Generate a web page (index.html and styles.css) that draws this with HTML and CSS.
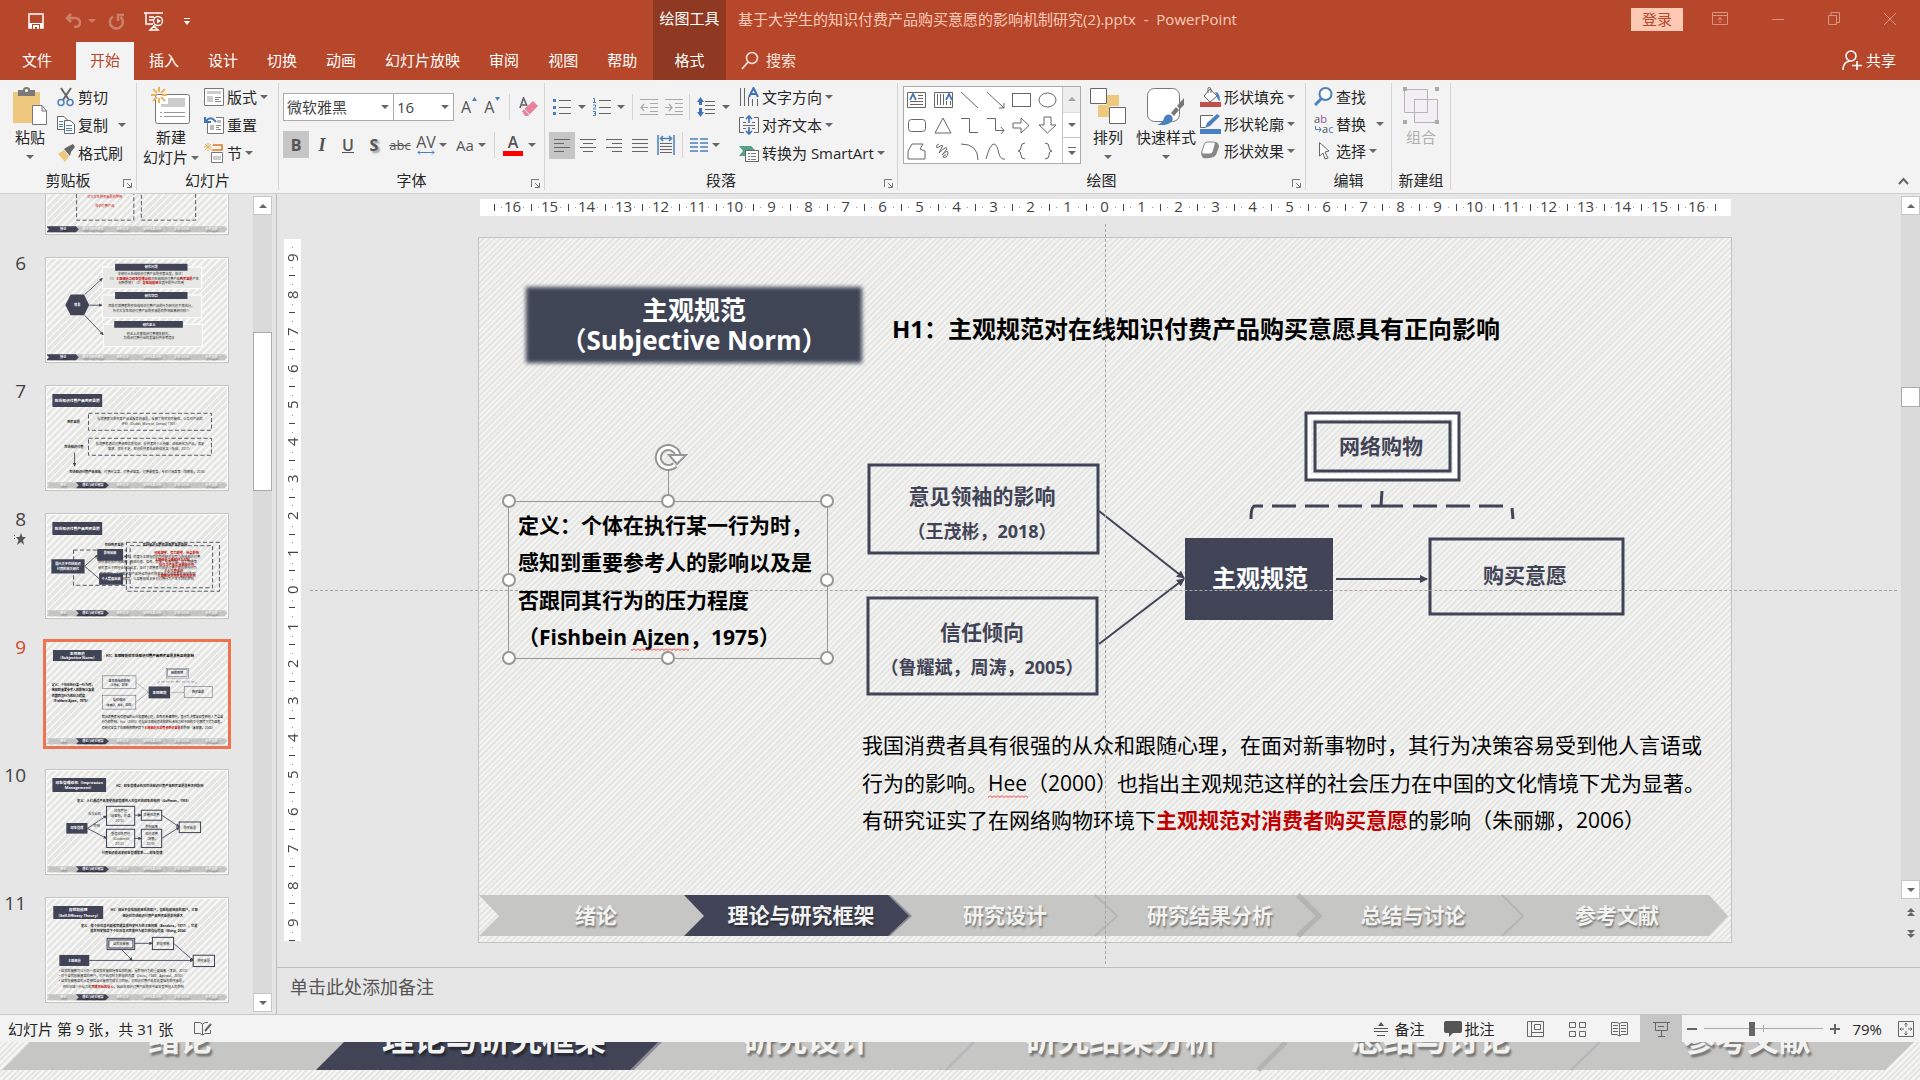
FILE: index.html
```html
<!DOCTYPE html>
<html lang="zh-CN">
<head>
    <meta charset="UTF-8">
    <meta name="viewport" content="width=device-width, initial-scale=1.0">
    <title>基于大学生的知识付费产品购买意愿的影响机制研究(2).pptx - PowerPoint</title>
    <link rel="stylesheet" href="styles.css">
</head>
<body>
    <!-- shared shapes -->
    <svg class="defs" aria-hidden="true">
        <defs>
            <marker id="arrow" viewBox="0 0 8 8" refX="7" refY="4" markerWidth="4" markerHeight="4" orient="auto">
                <path d="M0 0L8 4L0 8z" fill="#414456"/>
            </marker>
            <pattern id="wave" width="4" height="3" patternUnits="userSpaceOnUse">
                <path d="M0 .5L2 2.500L4 .5" fill="none" stroke="#f33"/>
            </pattern>
            <filter id="soft" x="-5%" y="-10%" width="110%" height="120%"><feGaussianBlur stdDeviation="2"/></filter>
            <g id="nav-bar">
                <path fill="#c6c6c5" d="M1 658H1231L1250 679L1231 699H1L21 679z"/>
                <path class="nav-sep" d="M617 658L639 679L617 699M1024 658L1045 679L1024 699"/>
                <path class="nav-sep thick" d="M820 658L841 679L820 699"/>
            </g>
            <g id="nav-text" class="nav-text">
                <text x="118" y="686">绪论</text>
                <text x="323" y="686">理论与研究框架</text>
                <text x="527" y="686">研究设计</text>
                <text x="732" y="686">研究结果分析</text>
                <text x="935" y="686">总结与讨论</text>
                <text x="1139" y="686">参考文献</text>
            </g>
            <g id="nav-first">
                <use href="#nav-bar"/>
                <path fill="#414456" d="M1 658H206L226 679L206 699H1L21 679z"/>
                <use href="#nav-text"/>
            </g>
            <g id="nav-second">
                <use href="#nav-bar"/>
                <path fill="#8b8c95" d="M408 658H412L434 679L412 699H408z"/>
                <path fill="#414456" d="M206 658H410L431 679L410 699H206L226 679z"/>
                <use href="#nav-text"/>
            </g>
            <g id="slide-9">
                <rect x="48" y="50" width="336" height="76" fill="#414456" filter="url(#soft)"/>
                <g class="t-title"><text x="216" y="83">主观规范</text><text x="216" y="113">（Subjective Norm）</text></g>
                <text class="t-h1" x="414" y="101">H1：主观规范对在线知识付费产品购买意愿具有正向影响</text>
                <g class="t-def">
                    <text x="40" y="296">定义：个体在执行某一行为时，</text>
                    <text x="40" y="333">感知到重要参考人的影响以及是</text>
                    <text x="40" y="371">否跟同其行为的压力程度</text>
                    <text x="40" y="408">（Fishbein Ajzen，1975）</text>
                </g>
                <g class="box">
                    <rect x="391" y="228" width="229" height="88"/>
                    <rect x="390" y="361" width="229" height="96"/>
                    <rect x="952" y="302" width="193" height="75"/>
                </g>
                <rect x="830" y="179" width="148" height="61" fill="none" stroke="#fff" stroke-width="6"/>
                <g class="box">
                    <rect x="828" y="176" width="153" height="67"/>
                    <rect x="837" y="185" width="135" height="49"/>
                </g>
                <rect x="707" y="301" width="148" height="82" fill="#414456"/>
                <g class="t-box">
                    <text x="504" y="267">意见领袖的影响</text>
                    <text x="504" y="403">信任倾向</text>
                    <text x="1047" y="346">购买意愿</text>
                    <text x="903" y="217">网络购物</text>
                </g>
                <g class="t-box small">
                    <text x="504" y="301">（王茂彬，2018）</text>
                    <text x="504" y="437">（鲁耀斌，周涛，2005）</text>
                </g>
                <text class="t-core" x="782" y="350">主观规范</text>
                <path class="line" marker-end="url(#arrow)" d="M621 274L706 341"/>
                <path class="line" marker-end="url(#arrow)" d="M621 407L706 342"/>
                <path class="line" marker-end="url(#arrow)" d="M858 342H949"/>
                <path class="bracket" d="M773 282Q773 269 777 269H785M794 269h24M827 269h24M860 269h24M893 269h32M903 269L904 254M935 269h24M968 269h24M1001 269h24M1034 271L1035 282"/>
                <g class="t-body">
                    <text x="384" y="516">我国消费者具有很强的从众和跟随心理，在面对新事物时，其行为决策容易受到他人言语或</text>
                    <text x="384" y="554">行为的影响。Hee（2000）也指出主观规范这样的社会压力在中国的文化情境下尤为显著。</text>
                    <text x="384" y="591">有研究证实了在网络购物环境下<tspan class="em">主观规范对消费者购买意愿</tspan>的影响（朱丽娜，2006）</text>
                </g>
                <use href="#nav-second"/>
            </g>
        </defs>
    </svg>

    <div class="app">
        <header class="titlebar">
            <div class="title-left">
                <div class="qat">
                    <button aria-label="保存"><svg width="16" height="16" viewBox="0 0 16 16"><path fill="none" stroke="#fff" stroke-width="1.5" d="M1 1H15V15H1z"/><path fill="#fff" d="M1 10h14v5H1z"/><path fill="#b7472a" d="M4 11h8v5H4z"/><path fill="#fff" d="M5 12h6v4H9v-2H7v2H5z"/></svg></button>
                    <button class="faded undo" aria-label="撤消"><svg width="18" height="16" viewBox="0 0 18 16"><path fill="none" stroke="#fff" stroke-width="2.500" d="M3 5H11Q16 5 16 10Q16 14 10 14M7 1L3 5L7 9"/></svg></button>
                    <i class="caret light faded"></i>
                    <button class="faded redo" aria-label="重复"><svg width="17" height="17" viewBox="0 0 17 17"><path fill="none" stroke="#fff" stroke-width="2.500" d="M5 3.500A6.500 6.500 0 1 0 12.500 4M10 8V2H16"/></svg></button>
                    <button class="show" aria-label="从头开始"><svg width="20" height="19" viewBox="0 0 20 19"><path fill="none" stroke="#fff" stroke-width="1.500" d="M0 1H19M2 1V12H9M5 5H10M5 8H9M10 13V15M6 18L10 14L14 18z"/><circle cx="14" cy="9" r="4.500" fill="none" stroke="#fff" stroke-width="1.300"/><path fill="#fff" d="M13 6.500L17 9L13 11.500z"/></svg></button>
                    <button class="more" aria-label="自定义快速访问工具栏"><svg width="6" height="7" viewBox="0 0 6 7"><path fill="#fff" d="M0 0H6V1H0zM0 3H6L3 7z"/></svg></button>
                </div>
                <nav class="tabs">
                    <button class="file">文件</button>
                    <button class="active">开始</button>
                    <button>插入</button>
                    <button>设计</button>
                    <button>切换</button>
                    <button>动画</button>
                    <button>幻灯片放映</button>
                    <button>审阅</button>
                    <button>视图</button>
                    <button>帮助</button>
                </nav>
            </div>
            <div class="context-tab">
                <span>绘图工具</span>
                <button>格式</button>
            </div>
            <div class="title-right">
                <div class="title-row">
                    <span class="doc">基于大学生的知识付费产品购买意愿的影响机制研究(2).pptx&nbsp; -&nbsp; PowerPoint</span>
                    <button class="login">登录</button>
                    <div class="win">
                        <button aria-label="功能区显示选项"><svg width="16" height="14" viewBox="0 0 16 14"><path d="M.5 .5H15.500V12.500H.5zM.5 3.500H15.500M8 11V5.500M5.500 8L8 5.500L10.500 8"/></svg></button>
                        <button aria-label="最小化"><svg width="12" height="14" viewBox="0 0 12 14"><path d="M0 7.500H12"/></svg></button>
                        <button aria-label="向下还原"><svg width="12" height="14" viewBox="0 0 12 14"><path d="M.5 3.500H8.500V12.500H.5zM3 3V.5H11.500V10.500H9"/></svg></button>
                        <button aria-label="关闭"><svg width="12" height="14" viewBox="0 0 12 14"><path d="M0 1L12 13M12 1L0 13"/></svg></button>
                    </div>
                </div>
                <div class="search-row">
                    <button class="search"><svg width="18" height="19" viewBox="0 0 18 19"><circle cx="11" cy="7" r="5.500" fill="none" stroke="#fbe5de" stroke-width="1.500"/><path stroke="#fbe5de" stroke-width="1.700" d="M7 11L1 18"/></svg>搜索</button>
                    <button class="share"><svg width="20" height="20" viewBox="0 0 20 20"><g fill="none" stroke="#fff" stroke-width="1.600"><circle cx="9" cy="6" r="5"/><path d="M1 20Q1 12 8 11M10 15.500H20M15 11V20"/></g></svg>共享</button>
                </div>
            </div>
        </header>

        <section class="ribbon">
            <div class="group clipboard">
                <div class="body">
                    <button class="big"><svg width="36" height="38" viewBox="0 0 36 38"><path fill="#edc87e" d="M1 5H28V36H1z"/><path fill="#7a7a7a" d="M6 3H11Q11 0 14.500 0Q18 0 18 3H23V9H6z"/><circle cx="14.500" cy="3.500" r="1.500" fill="#fff"/><path fill="#fff" stroke="#777" d="M20.500 18.500H30L34.500 24V37.500H20.500zM30 18.500V24H34.500"/></svg>粘贴<i class="caret"></i></button>
                    <div class="stack">
                        <button><svg width="18" height="20" viewBox="0 0 18 20"><path stroke="#666" stroke-width="2" fill="none" d="M4 1L12 13M14 1L6 13"/><g fill="none" stroke="#4a80bb" stroke-width="1.500"><circle cx="4" cy="15.500" r="3"/><circle cx="13" cy="15.500" r="3"/></g></svg>剪切</button>
                        <button><svg width="18" height="20" viewBox="0 0 18 20"><path fill="#fff" stroke="#666" d="M.5 1.500H7L10.500 5V14.500H.5z"/><path fill="#fff" stroke="#666" d="M7.500 5.500H13L17.500 9V18.500H7.500z"/><path stroke="#4a80bb" d="M2 6.500H6M2 9.500H6M2 11.500H6M9 10.500H15M9 13.500H15M9 15.500H15"/></svg>复制<i class="caret far"></i></button>
                        <button><svg width="18" height="18" viewBox="0 0 18 18"><path fill="#edc87e" d="M1 10L7 6L12 12L8 18z"/><path fill="#666" d="M7 5L10 3L16 0L18 3L14 8L13 12z"/></svg>格式刷</button>
                    </div>
                </div>
                <footer>剪贴板<svg class="launch" viewBox="0 0 9 9"><path d="M.5 8V.5H8M4 4L8 8M8.500 4V8.500H4"/></svg></footer>
            </div>

            <div class="group slides">
                <div class="body">
                    <button class="big"><svg width="40" height="38" viewBox="0 0 40 38"><rect x="4.500" y="7.500" width="34" height="29" rx="2" fill="#fff" stroke="#777"/><path fill="#ccc" d="M17 11H34V20H10V17H17z"/><path stroke="#999" d="M9 25.500H11M13 25.500H34M9 29.500H11M13 29.500H34"/><path stroke="#edb45b" stroke-width="2" d="M8 0V5M8 11V16M0 8H5M11 8H16M2 2L6 6M14 2L10 6M2 14L6 10M14 14L10 10"/></svg>新建<span>幻灯片<i class="caret"></i></span></button>
                    <div class="stack">
                        <button><svg width="20" height="18" viewBox="0 0 20 18"><path fill="#fff" stroke="#777" d="M.5 .5H19.500V17.500H.5z"/><path fill="#ccc" d="M3 3H17V6H3zM3 8H9V14H3z"/><path stroke="#888" d="M11 9.500H17M11 11.500H15M11 13.500H17"/></svg>版式<i class="caret"></i></button>
                        <button><svg width="20" height="18" viewBox="0 0 20 18"><path fill="#fff" stroke="#777" d="M3.500 5V17.500H19.500V1.500H12"/><path fill="#bbb" d="M13 4H17V7H13zM6 9H10V14H6z"/><path stroke="#888" d="M12 9.500H17M12 11.500H15M12 13.500H17"/><path fill="none" stroke="#3f74b5" stroke-width="2" d="M2 5Q7 -1 12 6M1 1V6H7"/></svg>重置</button>
                        <button><svg width="20" height="20" viewBox="0 0 20 20"><path stroke="#edb45b" d="M4 0V8M0 4H8M1 1L7 7M7 1L1 7"/><path fill="none" stroke="#dd7a24" stroke-width="1.500" d="M9 2H18V7H8"/><path fill="#fff" stroke="#777" d="M7.500 9.500H18.500V19.500H7.500z"/><path fill="#ccc" d="M9 13H17V17H9z"/></svg>节<i class="caret"></i></button>
                    </div>
                </div>
                <footer>幻灯片</footer>
            </div>

            <div class="group font">
                <div class="body rows">
                    <div class="row">
                        <span class="combo"><select class="family" aria-label="字体"><option>微软雅黑</option></select></span><span class="combo"><select class="size" aria-label="字号"><option>16</option></select></span>
                        <button class="tool grow">A<svg width="5" height="4" viewBox="0 0 5 4"><path fill="#4a80bb" d="M0 4L2.500 0L5 4z"/></svg></button>
                        <button class="tool grow">A<svg width="5" height="4" viewBox="0 0 5 4"><path fill="#4a80bb" d="M0 0H5L2.500 4z"/></svg></button>
                        <i class="vline"></i>
                        <button class="tool" aria-label="清除格式"><svg width="20" height="20" viewBox="0 0 20 20"><path fill="none" stroke="#666" stroke-width="1.700" d="M1 11L4.500 1L8 9M3 8H7"/><path fill="#e8819a" d="M3 14L14 4L19 9L9 19H6z"/><path stroke="#fff" d="M5 12L11 18"/></svg></button>
                    </div>
                    <div class="row marks">
                        <button class="tool on"><b>B</b></button>
                        <button class="tool serif">I</button>
                        <button class="tool under">U</button>
                        <button class="tool shadow">S</button>
                        <button class="tool strike">abc</button>
                        <button class="tool spacing">AV<svg width="18" height="5" viewBox="0 0 18 5"><path fill="none" stroke="#4a80bb" d="M1 2.500H17M3 .5L1 2.500L3 4.500M15 .5L17 2.500L15 4.500"/></svg></button><i class="caret"></i>
                        <button class="tool case">Aa</button><i class="caret"></i>
                        <i class="vline"></i>
                        <button class="tool color">A</button><i class="caret"></i>
                    </div>
                </div>
                <footer>字体<svg class="launch" viewBox="0 0 9 9"><path d="M.5 8V.5H8M4 4L8 8M8.500 4V8.500H4"/></svg></footer>
            </div>

            <div class="group para">
                <div class="body">
                    <div class="rows">
                        <div class="row">
                            <button class="tool" aria-label="项目符号"><svg width="18" height="18" viewBox="0 0 18 18"><path stroke="#666" d="M6 2.500H18M6 9.500H18M6 15.500H18"/><path stroke="#4a80bb" stroke-width="3" d="M0 2.500H3M0 9.500H3M0 15.500H3"/></svg></button><i class="caret"></i>
                            <button class="tool" aria-label="编号"><svg width="18" height="18" viewBox="0 0 18 18"><path stroke="#666" d="M6 2.500H18M6 9.500H18M6 15.500H18"/><path fill="none" stroke="#4a80bb" d="M0 .5H1.500V4.500M0 4.500H3M0 7H2.500V9L.5 11H3M0 13.500H2.500V17.500H0M1 15.500H2"/></svg></button><i class="caret"></i>
                            <i class="vline"></i>
                            <button class="tool" aria-label="降低列表级别"><svg width="18" height="18" viewBox="0 0 18 18"><path stroke="#aaa" stroke-width="1.200" fill="none" d="M0 1.500H18M10 5.500H18M10 9.500H18M10 13.500H18M0 16.500H18M1 9.500H8M4 6L1 9.500L4 13"/></svg></button>
                            <button class="tool" aria-label="提高列表级别"><svg width="18" height="18" viewBox="0 0 18 18"><path stroke="#aaa" stroke-width="1.200" fill="none" d="M0 1.500H18M10 5.500H18M10 9.500H18M10 13.500H18M0 16.500H18M0 9.500H7M4 6L7 9.500L4 13"/></svg></button>
                            <i class="vline"></i>
                            <button class="tool" aria-label="行距"><svg width="18" height="20" viewBox="0 0 18 20"><path stroke="#666" d="M8 4.500H18M8 8.500H18M8 12.500H18M8 16.500H18"/><path fill="#4472b8" d="M3.500 0L7 5H5V8H2V5H0zM3.500 20L7 15H5V11H2V15H0z"/></svg></button><i class="caret"></i>
                        </div>
                        <div class="row align">
                            <button class="tool on" aria-label="左对齐"><svg width="16" height="14" viewBox="0 0 16 14"><path d="M0 1.500H16M0 5.500H10M0 9.500H16M0 13.500H10"/></svg></button>
                            <button class="tool" aria-label="居中"><svg width="16" height="14" viewBox="0 0 16 14"><path d="M0 1.500H16M3 5.500H13M0 9.500H16M3 13.500H13"/></svg></button>
                            <button class="tool" aria-label="右对齐"><svg width="16" height="14" viewBox="0 0 16 14"><path d="M0 1.500H16M6 5.500H16M0 9.500H16M6 13.500H16"/></svg></button>
                            <button class="tool" aria-label="两端对齐"><svg width="16" height="14" viewBox="0 0 16 14"><path d="M0 1.500H16M0 5.500H16M0 9.500H16M0 13.500H16"/></svg></button>
                            <button class="tool" aria-label="分散对齐"><svg width="18" height="20" viewBox="0 0 18 20"><path stroke="#4a80bb" fill="none" stroke-width="1.500" d="M1 0V20M17 0V20M4 3.500H14M6 1L3.500 3.500L6 6M12 1L14.500 3.500L12 6"/><path d="M3 8.500H15M3 11.500H15M3 14.500H15M3 17.500H15"/></svg></button>
                            <i class="vline"></i>
                            <button class="tool" aria-label="分栏"><svg width="18" height="14" viewBox="0 0 18 14"><path stroke="#4a80bb" stroke-width="1.500" d="M0 1H8M10 1H18M0 5H8M10 5H18M0 9H8M10 9H18M0 13H8M10 13H18"/></svg></button><i class="caret"></i>
                        </div>
                    </div>
                    <div class="stack">
                        <button><svg width="20" height="20" viewBox="0 0 20 20"><path stroke="#666" d="M1.500 1V19M5.500 1V19M9.500 10V19M13.500 12V19M18.500 12V19"/><path fill="none" stroke="#4472b8" stroke-width="2" d="M10 10L14.500 1L19 10M12 7H17"/></svg>文字方向<i class="caret"></i></button>
                        <button><svg width="20" height="20" viewBox="0 0 20 20"><path fill="none" stroke="#666" d="M5 2.500H.5V17.500H5M15 2.500H19.500V17.500H15M4 7.500H7M13 7.500H16M4 10.500H16M4 13.500H7M13 13.500H16"/><path fill="none" stroke="#4472b8" stroke-width="1.700" d="M10 1V8M7 4L10 1L13 4M10 19V12M7 16L10 19L13 16"/></svg>对齐文本<i class="caret"></i></button>
                        <button><svg width="20" height="18" viewBox="0 0 20 18"><path fill="#55a287" d="M0 2H12L16 6V8H6V12H0L4 7z"/><path fill="#fff" stroke="#666" d="M6.500 6.500H19.500V17.500H6.500z"/><path stroke="#777" d="M9 9.500H11M12 9.500H17M9 12.500H11M12 12.500H17M9 15.500H11M12 15.500H17"/></svg>转换为 SmartArt<i class="caret"></i></button>
                    </div>
                </div>
                <footer>段落<svg class="launch" viewBox="0 0 9 9"><path d="M.5 8V.5H8M4 4L8 8M8.500 4V8.500H4"/></svg></footer>
            </div>

            <div class="group drawing">
                <div class="body">
                    <div class="gallery">
                        <svg width="158" height="76" viewBox="0 0 158 76">
                            <g fill="none" stroke="#666">
                                <path d="M3.500 5.500H21.500V20.500H3.500zM14 8.500H19M14 11.500H19M6 14.500H19M6 17.500H19"/>
                                <path d="M30.500 5.500H48.500V20.500H30.500zM33.500 7V18M36.500 7V18M39.500 7V18M42.500 14V18M46.500 14V18"/>
                                <path d="M57 5L74 21M83 5L100 21M95 21H100V16"/>
                                <rect x="108.500" y="6.500" width="18" height="13"/><ellipse cx="143.500" cy="13" rx="8.500" ry="7"/>
                                <rect x="4.500" y="32.500" width="17" height="12" rx="3"/><path d="M39 31L47 46H31zM57 31.500H65.500V45.500H74M83 31.500H91.500V43.500H100M97 40L100 43.500L97 47M109 36H117V31L125 38.500L117 46V41H109zM140 30H147V38H152L143.500 46L135 38H140z"/>
                                <path d="M12 57H19L16 62L21 64V72H4V64L8 57zM35 57Q31 58 33 61Q41 56 38 60L35 66Q43 58 43 62L38 68Q44 62 44 66Q43 72 39 70Q40 67 42 68M57 57Q74 57 74 73M82 72Q86 57 90 57Q93 57 95 67Q97 73 101 72M121 56Q117 56 117 60Q117 64 114 64Q117 64 117 68Q117 72 121 72M141 56Q145 56 145 60Q145 64 148 64Q145 64 145 68Q145 72 141 72"/>
                            </g>
                            <g fill="none" stroke="#4472b8" stroke-width="1.700"><path d="M6 13L9 7L12 13M42 13L45 7L48 13"/></g>
                        </svg>
                        <div class="scroller">
                            <button disabled aria-label="上"><i class="caret up"></i></button>
                            <button aria-label="下"><i class="caret"></i></button>
                            <button aria-label="其他"><svg width="8" height="8" viewBox="0 0 8 8"><path fill="#666" d="M0 0H8V1H0zM0 4H8L4 8z"/></svg></button>
                        </div>
                    </div>
                    <button class="big"><svg width="36" height="38" viewBox="0 0 36 38"><path fill="#edc87e" d="M17 8H29V19H17zM8 18H19V30H8z"/><path fill="#fff" stroke="#666" d="M.5 1.500H16.500V16.500H.5zM19.500 20.500H35.500V36.500H19.500z"/></svg>排列<i class="caret"></i></button>
                    <button class="big quick"><svg width="38" height="38" viewBox="0 0 38 38"><rect x=".5" y="1.500" width="32" height="33" rx="7" fill="#fff" stroke="#777"/><path fill="#4a80bb" d="M10 38Q16 36 17 31Q19 26 24 28Q28 33 23 36Q18 39 10 38z"/><path fill="#777" d="M24 26L29 20L32 23L27 29zM30 19L37 11V18L33 22z"/></svg>快速样式<i class="caret"></i></button>
                    <div class="stack tight">
                        <button><svg width="21" height="20" viewBox="0 0 21 20"><path fill="#fff" stroke="#666" d="M10 2L17 9L10 15L4 9zM8 6V1Q10 -1 11 2V6"/><path fill="#4a80bb" d="M15 5Q20 5 20 14Q17 13 17 9z"/><path fill="#c0504d" d="M0 15H21V20H0z"/></svg>形状填充<i class="caret"></i></button>
                        <button><svg width="21" height="20" viewBox="0 0 21 20"><path fill="#fff" stroke="#666" d="M13 1.500H.5V13.500H5"/><path fill="#4a80bb" d="M5 14L7 9L17 0L20 2L10 12z"/><path fill="#4a7fc0" d="M0 15H21V20H0z"/></svg>形状轮廓<i class="caret"></i></button>
                        <button><svg width="21" height="20" viewBox="0 0 21 20"><path fill="#888" d="M6 1H16Q19 2 19 6L16 14Q12 18 3 17L1 13z"/><path fill="#fff" stroke="#888" d="M7 1H14Q16 1 15 4L13 11Q12 13 10 13H3Q1 13 2 10L4 4Q5 1 7 1z"/></svg>形状效果<i class="caret"></i></button>
                    </div>
                </div>
                <footer>绘图<svg class="launch" viewBox="0 0 9 9"><path d="M.5 8V.5H8M4 4L8 8M8.500 4V8.500H4"/></svg></footer>
            </div>

            <div class="group editing">
                <div class="body">
                    <div class="stack tight">
                        <button><svg width="19" height="19" viewBox="0 0 19 19"><circle cx="11.500" cy="7" r="6" fill="#fff" stroke="#4a80bb" stroke-width="2"/><path stroke="#4a80bb" stroke-width="3" d="M7 12L1 18"/></svg>查找</button>
                        <button><svg class="i-replace" width="19" height="20" viewBox="0 0 19 20"><text x="0" y="9">a<tspan fill="#8e4fa8">b</tspan></text><text x="8" y="19">a<tspan fill="#4a80bb">c</tspan></text><path fill="none" stroke="#4a80bb" d="M1.500 12V15.500H7M5 13L7 15.500L5 18"/></svg>替换<i class="caret far"></i></button>
                        <button><svg width="19" height="19" viewBox="0 0 19 19"><path fill="#fff" stroke="#666" d="M5.500 1.500V15L9 12L11 18L14 17L11 11L15 10z"/></svg>选择<i class="caret"></i></button>
                    </div>
                </div>
                <footer>编辑</footer>
            </div>

            <div class="group newgroup">
                <div class="body">
                    <button class="big" disabled><svg width="36" height="38" viewBox="0 0 36 38"><path fill="#f3eef6" stroke="#b5b5b5" d="M1.500 2.500H24.500V25.500H1.500zM11.500 12.500H34.500V35.500H11.500z"/><path fill="none" stroke="#b5b5b5" d="M11.500 12.500H24.500V25.500H11.500z"/><path fill="#aaa" d="M0 0h4v4H0zM32 0h4v4h-4zM0 33h4v4H0zM32 33h4v4h-4z"/></svg>组合</button>
                </div>
                <footer>新建组</footer>
            </div>
            <button class="collapse" aria-label="折叠功能区"><svg width="11" height="8" viewBox="0 0 11 8"><path fill="none" stroke="#666" stroke-width="2" d="M1 7L5.500 2L10 7"/></svg></button>
        </section>

        <main class="workspace">
            <aside class="thumbs">
                <ol>
                    <li><span class="num">5</span>
                        <svg class="thumb" viewBox="0 0 1254 706">
                            <g class="dash"><rect x="211" y="60" width="394" height="556"/><rect x="657" y="60" width="374" height="556"/></g>
                            <g class="mini red"><text x="405" y="464">对大学生购买意愿的影响</text><text x="405" y="526">知识付费产品</text></g>
                            <use href="#nav-first"/>
                        </svg></li>
                    <li><span class="num">6</span>
                        <svg class="thumb" viewBox="0 0 1254 706">
                            <path fill="#414456" d="M133 318L170 247H262L298 318L262 389H170z"/>
                            <g class="panel"><rect x="389" y="57" width="683" height="149"/><rect x="389" y="250" width="683" height="155"/><rect x="396" y="451" width="682" height="154"/></g>
                            <path fill="#414456" d="M476 34H975V82H476zM476 229H975V277H476zM470 428H943V476H470z"/>
                            <g class="mini white"><text x="215" y="326">背景</text><text x="725" y="67">研究问题</text><text x="725" y="262">研究切口</text><text x="710" y="461">研究意义</text></g>
                            <g class="mini"><text x="725" y="111">本研究从在线知识付费产品购买者出发，探讨：</text>
                                <text x="740" y="147">（1）<tspan class="em">主观规范与印象管理动机</tspan>对在线知识付费产品<tspan class="em">购买意愿</tspan>产生</text>
                                <text x="725" y="175">何种影响？（2）<tspan class="em">自我效能感</tspan>在其中的中介作用</text>
                                <text x="725" y="330">目前对消费者购买在线知识付费产品的行为研究还不够充分，</text>
                                <text x="725" y="365">针对大学生知识付费产品购买意愿的影响因素研究较少</text>
                                <text x="710" y="522">理论上丰富知识付费相关研究，</text><text x="710" y="556">为知识付费行业的发展提供参考建议</text></g>
                            <path class="line fat" marker-end="url(#arrow)" d="M266 247L389 135"/><path class="line fat" marker-end="url(#arrow)" d="M298 320H385"/><path class="line fat" marker-end="url(#arrow)" d="M266 389L394 524"/>
                            <use href="#nav-first"/>
                        </svg></li>
                    <li><span class="num">7</span>
                        <svg class="thumb" viewBox="0 0 1254 706">
                            <path fill="#414456" d="M44 50H387V140H44z"/>
                            <text class="mini-title" x="215" y="104">在线知识付费产品购买意愿</text>
                            <g class="dash"><rect x="293" y="183" width="847" height="117"/><rect x="293" y="355" width="847" height="117"/></g>
                            <g class="mini strong"><text x="190" y="249">购买意愿</text><text x="192" y="421">在线知识付费</text></g>
                            <g class="mini"><text x="716" y="231">指消费者对购买某产品或服务的意愿，反映了购买的可能性，以及对产品的</text><text x="716" y="265">评价（Dodds, Monroe, Grewal, 1991）</text>
                                <text x="716" y="403">指消费者通过付费获取优质知识，提供者将个人技能、经验转化为产品，满足</text><text x="716" y="438">需求、弥补不足、知识提供者由此获得收益（张帅，2017）</text>
                                <text x="635" y="592"><tspan class="strong">在线知识付费产品包括</tspan>：付费问答类、付费讲座类、付费课程类、专栏订阅类等（陈晓勤，2018）</text></g>
                            <path class="line fat" marker-end="url(#arrow)" d="M197 453V547"/>
                            <use href="#nav-second"/>
                        </svg></li>
                    <li><span class="num">8<svg class="star" width="12" height="12" viewBox="0 0 12 12"><path fill="#555" d="M7 0L8.500 4H12L9 7L10 12L7 9L3 12L4.500 7L2 4H5.500zM0 2h1v1H0zM0 5h1v1H0z"/></svg></span>
                        <svg class="thumb" viewBox="0 0 1254 706">
                            <path fill="#414456" d="M44 50H387V140H44z"/>
                            <text class="mini-title" x="215" y="104">在线知识付费产品购买意愿</text>
                            <g class="dash"><rect x="190" y="243" width="364" height="243"/><rect x="554" y="190" width="641" height="337"/><rect x="580" y="213" width="568" height="290"/></g>
                            <g class="mini strong"><text x="470" y="218">在线购买意愿</text><text x="820" y="215">在线知识付费产品购买意愿影响</text></g>
                            <g class="mini"><text x="700" y="300">感知有用性、感知易用性、态度与主观规范的影响研究模型与在线知识付费</text><text x="700" y="335">购买意愿的影响因素：感知价值、信任、质量、社会影响、努力期望等</text><text x="700" y="375">研究者从不同理论视角出发，探讨了消费者对知识付费产品的购买行为</text><text x="700" y="412">信任倾向、个体需求和产品特征均会对购买意愿造成显著的正向影响</text><text x="700" y="448">便利条件、主观规范、以及感知成本会对付费行为产生不同的影响</text></g>
                            <g class="mini strong red"><text x="900" y="270">绩效期望、努力期望、社会影响</text><text x="870" y="318">主观规范与感知行为控制</text><text x="900" y="355">信任与产品质量感知价值</text><text x="880" y="392">个人付费意识</text><text x="900" y="430">主观规范对购买意愿的影响</text></g>
                            <path fill="#414456" d="M37 307H266V405H37zM353 236H531V316H353zM366 403H531V483H366z"/>
                            <path class="line fat" d="M353 276L266 355L366 440"/>
                            <g class="mini white"><text x="151" y="345">国内关于在线知识</text><text x="151" y="381">付费的相关研究</text><text x="442" y="272">影响因素</text><text x="448" y="448">个人层面因素</text></g>
                            <use href="#nav-second"/>
                        </svg></li>
                    <li class="current"><span class="num">9</span>
                        <svg class="thumb" viewBox="0 0 1254 706"><use href="#slide-9"/></svg></li>
                    <li><span class="num">10</span>
                        <svg class="thumb" viewBox="0 0 1254 706">
                            <path fill="#414456" d="M44 50H414V147H44z"/>
                            <g class="mini-title"><text x="229" y="91">印象管理动机（Impression</text><text x="229" y="127">Management）</text></g>
                            <g class="mini strong"><text x="785" y="114">H2：印象管理动机对在线知识付费产品购买意愿具有正向影响</text><text x="605" y="212">定义：人们通过产品来塑造和管理他人对自己的印象的倾向（Goffman，1959）</text><text x="593" y="573">付费知识能满足印象管理需求——印象管理</text></g>
                            <g class="box fat"><rect x="417" y="245" width="194" height="131"/><rect x="657" y="272" width="140" height="69"/><rect x="417" y="403" width="194" height="126"/><rect x="657" y="403" width="140" height="126"/><rect x="918" y="353" width="147" height="73"/></g>
                            <path fill="#414456" d="M140 360H286V433H140z"/>
                            <text class="mini white" x="213" y="404">印象管理</text>
                            <g class="mini"><text x="514" y="284">印象管理</text><text x="514" y="316">（翁智刚，兆谦，</text><text x="514" y="350">2013）</text><text x="727" y="314">炫耀性消费</text><text x="514" y="442">塑造印象管理</text><text x="514" y="475">（Goldsmith,</text><text x="514" y="509">2012）</text><text x="727" y="442">知识消费</text><text x="727" y="475">（胡鹏，</text><text x="727" y="509">2019）</text><text x="727" y="393">影响因素</text><text x="991" y="399">购买意愿</text><text x="335" y="305">社交动机</text><text x="350" y="387">影响</text></g>
                            <path class="line fat" marker-end="url(#arrow)" d="M286 397L417 310"/><path class="line fat" marker-end="url(#arrow)" d="M286 397L417 466"/><path class="line fat" marker-end="url(#arrow)" d="M611 306H657"/><path class="line fat" marker-end="url(#arrow)" d="M611 466H657"/><path class="line fat" marker-end="url(#arrow)" d="M797 306L918 386"/><path class="line fat" marker-end="url(#arrow)" d="M797 466L918 390"/>
                            <use href="#nav-second"/>
                        </svg></li>
                    <li><span class="num">11</span>
                        <svg class="thumb" viewBox="0 0 1254 706">
                            <path fill="#414456" d="M50 50H394V140H50z"/>
                            <g class="mini-title"><text x="222" y="87">自我效能感</text><text x="222" y="124">（Self-Efficacy Theory）</text></g>
                            <g class="mini strong"><text x="745" y="85">H3：相比于自我效能感低的用户，自我效能感高的用户，主观</text><text x="735" y="124">规范对在线知识付费产品购买意愿影响更大</text><text x="642" y="195">定义：指个体对自己能够完成某项特定行为的主观判断（Bandura，1977），它是</text><text x="642" y="230">指在特定情境下个体对自己完成行为能力的自信程度（Wang, 2004）</text></g>
                            <g class="box fat"><rect x="421" y="273" width="190" height="77"/><rect x="433" y="284" width="166" height="55"/><rect x="733" y="266" width="146" height="84"/><rect x="1014" y="389" width="147" height="78"/></g>
                            <path fill="#414456" d="M92 387H298V463H92z"/>
                            <text class="mini white" x="195" y="433">主观规范</text>
                            <g class="mini"><text x="516" y="319">自我效能感</text><text x="806" y="316">积极情感</text><text x="1087" y="436">购买意愿</text></g>
                            <g class="mini start"><text x="90" y="506">• 自我效能感可以分为一般自我效能和特殊自我效能，是影响行为的重要因素（李凯，2010）</text><text x="90" y="541">• 对于自我效能感高的用户，对产品有较为积极的态度（Davis，1989；Agarwal，2000）</text><text x="90" y="576">• 自我效能感高的人更相信自己能够完成学习目标，对知识付费产品有着更强的购买意愿，</text><text x="115" y="615">则往往缺少行动力和<tspan class="em">完成目标的信心</tspan>，因此在知识付费产品购买中容易受到他人的影响</text></g>
                            <path class="line fat" marker-end="url(#arrow)" d="M298 425H1014"/><path class="line fat" marker-end="url(#arrow)" d="M520 350L595 425"/><path class="line fat" marker-end="url(#arrow)" d="M611 307H733"/><path class="line fat" marker-end="url(#arrow)" d="M879 307L1014 425"/>
                            <use href="#nav-second"/>
                        </svg></li>
                </ol>
                <div class="scrollbar"><button aria-label="向上"><i class="caret up"></i></button><span class="track"><span class="handle tall"></span></span><button aria-label="向下"><i class="caret"></i></button></div>
            </aside>

            <div class="editor">
                <div class="stage">
                    <div class="canvas">
                        <div class="ruler h"><span>16</span><span>15</span><span>14</span><span>13</span><span>12</span><span>11</span><span>10</span><span>9</span><span>8</span><span>7</span><span>6</span><span>5</span><span>4</span><span>3</span><span>2</span><span>1</span><span>0</span><span>1</span><span>2</span><span>3</span><span>4</span><span>5</span><span>6</span><span>7</span><span>8</span><span>9</span><span>10</span><span>11</span><span>12</span><span>13</span><span>14</span><span>15</span><span>16</span></div>
                        <div class="ruler v"><span>9</span><span>8</span><span>7</span><span>6</span><span>5</span><span>4</span><span>3</span><span>2</span><span>1</span><span>0</span><span>1</span><span>2</span><span>3</span><span>4</span><span>5</span><span>6</span><span>7</span><span>8</span><span>9</span></div>
                        <div class="slide-wrap">
                            <svg class="slide" viewBox="0 0 1254 706">
                                <use href="#slide-9"/>
                                <!-- spelling marks -->
                                <rect x="153" y="411" width="58" height="3" fill="url(#wave)"/>
                                <rect x="510" y="558" width="40" height="3" fill="url(#wave)"/>
                                <g class="selection">
                                    <path d="M30.500 264.500H349.500V421.500H30.500zM190.500 264V232"/>
                                    <circle cx="31" cy="264" r="6"/><circle cx="190" cy="264" r="6"/><circle cx="349" cy="264" r="6"/>
                                    <circle cx="31" cy="343" r="6"/><circle cx="349" cy="343" r="6"/>
                                    <circle cx="31" cy="421" r="6"/><circle cx="190" cy="421" r="6"/><circle cx="349" cy="421" r="6"/>
                                    <path class="rot-out" d="M197 228A10 10 0 1 1 200 218"/><path class="rot-in" d="M197 228A10 10 0 1 1 200 218"/>
                                    <path class="rot-head" d="M191 218H208L199 227z"/>
                                </g>
                            </svg>
                            <i class="guide vert"></i>
                            <i class="guide horz"></i>
                        </div>
                    </div>
                    <div class="scrollbar"><button aria-label="向上"><i class="caret up"></i></button><span class="track"><span class="handle"></span></span><button aria-label="向下"><i class="caret"></i></button>
                        <button class="page" aria-label="上一张幻灯片"><i class="caret up"></i><i class="caret up"></i></button>
                        <button class="page" aria-label="下一张幻灯片"><i class="caret"></i><i class="caret"></i></button></div>
                </div>
                <div class="notes">单击此处添加备注</div>
            </div>
        </main>

        <footer class="status">
            <span>幻灯片 第 9 张，共 31 张</span>
            <button class="spell" aria-label="拼写检查"><svg width="18" height="16" viewBox="0 0 18 16"><path fill="none" stroke="#666" d="M8.500 14L6 12.500H.5V1.500H6L8.500 3V14L11 12.500H16.500V9M8.500 3L11 1.500H14"/><path stroke="#666" stroke-width="2" d="M11 10L17 3"/></svg></button>
            <button class="note-btn"><svg width="14" height="14" viewBox="0 0 14 14"><path fill="#555" d="M7 0L10 4H4z"/><path stroke="#555" d="M0 6.500H14M0 9.500H14M3 13.500H11"/></svg>备注</button>
            <button class="comment-btn"><svg width="18" height="16" viewBox="0 0 18 16"><path fill="#555" d="M2 0H16Q18 0 18 2V10Q18 12 16 12H9L5 16V12H2Q0 12 0 10V2Q0 0 2 0z"/></svg>批注</button>
            <div class="views">
                <button aria-label="普通视图"><svg width="17" height="16" viewBox="0 0 17 16"><path d="M.5 .5H16.500V15.500H.5zM4.500 .5V15.500M4.500 11.500H16.500M7.500 3.500H13.500V8.500H7.500z"/></svg></button>
                <button aria-label="幻灯片浏览"><svg width="17" height="16" viewBox="0 0 17 16"><path d="M.5 1.500H6.500V6.500H.5zM10.500 1.500H16.500V6.500H10.500zM.5 10.500H6.500V15.500H.5zM10.500 10.500H16.500V15.500H10.500z"/></svg></button>
                <button aria-label="阅读视图"><svg width="17" height="16" viewBox="0 0 17 16"><path d="M8.500 15V2.500L6 1.500H.5V13.500H6L8.500 15L11 13.500H16.500V1.500H11L8.500 2.500M2 4.500H7M2 7.500H7M2 10.500H7M10 4.500H15M10 7.500H15M10 10.500H15"/></svg></button>
                <button class="on" aria-label="幻灯片放映"><svg width="17" height="16" viewBox="0 0 17 16"><path d="M0 1.500H17M2.500 2V9.500H14.500V2M8.500 10V15M5 15.500H12M5 5.500H11"/></svg></button>
            </div>
            <button class="zoom-btn" aria-label="缩小"><svg width="10" height="10" viewBox="0 0 10 10"><path fill="#666" d="M0 4H10V6H0z"/></svg></button>
            <input type="range" min="0" max="100" value="39" aria-label="缩放">
            <button class="zoom-btn" aria-label="放大"><svg width="10" height="10" viewBox="0 0 10 10"><path fill="#666" d="M0 4H10V6H0zM4 0H6V10H4z"/></svg></button>
            <button class="percent">79%</button>
            <button class="fit" aria-label="适应窗口"><svg width="16" height="16" viewBox="0 0 16 16"><path fill="none" stroke="#666" d="M.5 .5H15.500V15.500H.5zM8 2V6M6.500 3.500L8 2L9.500 3.500M8 14V10M6.500 12.500L8 14L9.500 12.500M2 8H6M3.500 6.500L2 8L3.500 9.500M14 8H10M12.500 6.500L14 8L12.500 9.500"/></svg></button>
        </footer>

        <!-- running slide show, visible under the window -->
        <div class="backdrop">
            <svg viewBox="0 0 1920 38" preserveAspectRatio="xMidYMin slice">
                <path fill="#c6c6c5" d="M30 0H1914L1885 28H2z"/>
                <path fill="#8b8c95" d="M655 0H662L634 28H627z"/>
                <path fill="#414456" d="M344 0H658L630 28H316z"/>
                <path class="nav-sep" d="M974 0L946 28M1600 0L1571 28"/>
                <path class="nav-sep thick" d="M1286 0L1258 28"/>
                <g class="show-text">
                    <text x="180" y="9">绪论</text><text x="494" y="9">理论与研究框架</text><text x="807" y="9">研究设计</text>
                    <text x="1121" y="9">研究结果分析</text><text x="1431" y="9">总结与讨论</text><text x="1747" y="9">参考文献</text>
                </g>
            </svg>
        </div>
    </div>
</body>
</html>
```
FILE: styles.css
```css
* {
    box-sizing: border-box;
}
body {
    margin: 0;
    font-family: "Open Sans", "Noto Sans CJK SC", sans-serif;
    font-size: 15px;
    line-height: 20px;
    color: #262626;
    background: #e6e6e6;
}
button {
    font: inherit;
    color: inherit;
    background: none;
    border: 0;
    padding: 0;
    display: flex;
    align-items: center;
    justify-content: center;
    white-space: nowrap;
}
svg {
    display: block;
    flex: none;
}
.defs {
    position: absolute;
    width: 0;
    height: 0;
}
.app {
    display: flex;
    flex-direction: column;
    height: 100vh;
    overflow: hidden;
}
.caret {
    display: inline-block;
    flex: none;
    border: 4px solid transparent;
    border-top-color: #666;
    border-bottom: 0;
}
.caret.up {
    border-top: 0;
    border-bottom: 4px solid #666;
}
.caret.light {
    border-top-color: #fff;
}
.faded {
    opacity: 0.3;
}

/* title bar */
.titlebar {
    display: flex;
    height: 80px;
    flex: none;
    background: #b7472a;
    color: #fff;
}
.title-left {
    width: 653px;
    display: flex;
    flex-direction: column;
}
.qat {
    height: 42px;
    padding-left: 28px;
    display: flex;
    align-items: center;
}
.qat .undo {
    margin: 0 6px 0 20px;
}
.qat .redo {
    margin-left: 12px;
}
.qat .show {
    margin: 0 20px 0 19px;
}
.tabs {
    flex: 1;
    display: flex;
    gap: 1px;
}
.tabs button {
    padding: 0 14px 3px;
}
.tabs .file {
    padding: 0 23px 3px 22px;
}
.tabs .active {
    background: #f3f3f3;
    color: #b7472a;
}
.context-tab {
    width: 73px;
    background: #903922;
    display: flex;
    flex-direction: column;
    align-items: center;
    white-space: nowrap;
}
.context-tab span {
    height: 42px;
    line-height: 36px;
}
.context-tab button {
    flex: 1;
    padding-bottom: 3px;
}
.title-right {
    flex: 1;
    padding-left: 12px;
}
.title-row {
    display: flex;
    align-items: center;
    height: 38px;
}
.doc {
    flex: 1;
    color: #fcccbb;
}
.login {
    width: 52px;
    height: 23px;
    background: #fcc9b5;
    color: #b7472a;
}
.win {
    display: flex;
    gap: 44px;
    padding: 0 24px 0 29px;
}
.win path {
    fill: none;
    stroke: #dc9280;
}
.search-row {
    display: flex;
    justify-content: space-between;
    height: 42px;
    padding: 2px 24px 0 3px;
}
.search {
    gap: 7px;
    color: #fbe5de;
}
.share {
    gap: 4px;
}

/* ribbon */
.ribbon {
    display: flex;
    flex: none;
    height: 114px;
    padding: 3px 0;
    background: #f3f3f3;
    border-bottom: 1px solid #cfcfcf;
}
.group {
    display: flex;
    flex-direction: column;
    border-right: 1px solid #d4d4d4;
}
.group .body {
    flex: 1;
    display: flex;
    align-items: flex-start;
}
.group footer {
    position: relative;
    text-align: center;
    height: 20px;
    line-height: 20px;
}
.launch {
    position: absolute;
    right: 4px;
    bottom: 2px;
    width: 9px;
    height: 9px;
}
.launch path {
    fill: none;
    stroke: #777;
}
.big {
    flex-direction: column;
    padding-top: 4px;
}
.big svg {
    margin-bottom: 2px;
}
.big > .caret {
    margin-top: 8px;
}
.big span .caret {
    margin: 0 0 3px 3px;
}
.big:disabled {
    color: #b0b0b0;
}
.stack button {
    height: 28px;
    gap: 3px;
    justify-content: flex-start;
}
.stack.tight button {
    height: 27px;
}
.stack .far {
    margin-left: 7px;
}
.vline {
    width: 1px;
    height: 26px;
    background: #d4d4d4;
}
.row {
    display: flex;
    align-items: center;
}
.tool {
    height: 27px;
    color: #555;
}
.tool.on {
    background: #c6c6c6;
}
.clipboard {
    width: 137px;
}
.clipboard .body {
    padding-left: 12px;
    gap: 9px;
}
.slides {
    width: 142px;
}
.slides .body {
    padding-left: 6px;
    gap: 5px;
}
.font {
    width: 266px;
}
.font .body.rows {
    flex-direction: column;
    padding: 10px 0 0 4px;
    gap: 10px;
}
.combo {
    position: relative;
}
.combo::after {
    content: "";
    position: absolute;
    right: 5px;
    top: 12px;
    border: 4px solid transparent;
    border-top-color: #666;
    border-bottom: 0;
}
select {
    appearance: none;
    height: 28px;
    border: 1px solid #ababab;
    border-radius: 0;
    background: #fff;
    font: inherit;
    color: #444;
    padding: 0 3px;
    display: block;
}
.family {
    width: 111px;
}
.size {
    width: 60px;
    border-left: 0;
}
.font .row .grow {
    margin-left: 7px;
    font-size: 16px;
    gap: 1px;
}
.grow svg {
    align-self: flex-start;
    margin-top: 3px;
}
.font .row:first-child .vline {
    margin: 0 9px;
}
.marks .tool {
    width: 26px;
    font-size: 16px;
}
.marks .tool.serif {
    font-family: "Liberation Serif", serif;
    font-size: 18px;
    font-style: italic;
    font-weight: bold;
}
.marks .under {
    text-decoration: underline;
    font-weight: 600;
}
.shadow {
    font-weight: bold;
    text-shadow: 2px 2px 2px #999;
}
.marks .tool.strike {
    font-size: 13px;
    text-decoration: line-through;
}
.marks .spacing {
    flex-direction: column;
    line-height: 16px;
}
.marks .tool.case {
    margin-left: 5px;
    font-size: 15px;
}
.marks .vline {
    margin: 0 8px;
}
.marks .tool.color {
    height: 22px;
    width: 20px;
    margin-right: 5px;
    border-bottom: 5px solid #f00;
    font-weight: 600;
    line-height: 16px;
}
.para {
    width: 353px;
}
.para .body {
    padding-left: 4px;
    gap: 9px;
}
.para .rows {
    width: 181px;
    padding-top: 10px;
}
.para .row {
    height: 28px;
    margin-bottom: 10px;
    justify-content: space-between;
    padding-left: 4px;
}
.para .row.align {
    padding: 0;
    justify-content: flex-start;
}
.align .tool {
    width: 26px;
}
.align .vline {
    margin: 0 3px;
}
.align svg path:not([stroke]) {
    stroke: #666;
}
.drawing {
    width: 408px;
}
.drawing .body {
    padding-left: 5px;
}
.gallery {
    display: flex;
    margin: 3px 9px 0 0;
    border: 1px solid #ababab;
    background: #fff;
}
.scroller {
    width: 18px;
    display: flex;
    flex-direction: column;
    border-left: 1px solid #c6c6c6;
}
.scroller button {
    flex: 1;
    border-bottom: 1px solid #c6c6c6;
}
.scroller button:last-child {
    border-bottom: 0;
}
.scroller button:disabled {
    background: #e4e4e4;
    opacity: 0.6;
}
.drawing .quick {
    margin: 0 4px 0 10px;
}
.editing {
    width: 86px;
}
.editing .body {
    padding-left: 8px;
}
.i-replace {
    overflow: visible;
    font-size: 11px;
    fill: #555;
}
.newgroup {
    width: 59px;
}
.newgroup .body {
    justify-content: center;
}
.collapse {
    margin: auto 11px 5px auto;
}

/* work area */
.workspace {
    flex: 1;
    min-height: 0;
    display: flex;
}
.thumbs {
    width: 277px;
    flex: none;
    display: flex;
    justify-content: space-between;
    border-right: 1px solid #bdbdbd;
    padding-right: 4px;
    overflow: hidden;
}
.thumbs ol {
    list-style: none;
    margin: 0;
    padding: 0 0 11px;
    display: flex;
    flex-direction: column;
    justify-content: flex-end;
    gap: 22px;
}
.thumbs li {
    display: flex;
    gap: 19px;
}
.num {
    width: 26px;
    display: flex;
    flex-direction: column;
    align-items: flex-end;
    font-size: 19px;
    line-height: 12px;
    color: #444;
    gap: 8px;
}
.thumb {
    width: 184px;
    height: 106px;
    border: 1px solid #c3c3c3;
    outline: 1px solid #fff;
    outline-offset: -2px;
    background: repeating-linear-gradient(135deg, #e6e6e4 0 3px, #f8f8f6 3px 5px);
}
.current .num {
    color: #d24726;
}
.current .thumb {
    outline: 3px solid #f0734f;
    outline-offset: -1px;
}
.current .box rect {
    stroke-width: 6px;
}
.scrollbar {
    width: 19px;
    flex: none;
    display: flex;
    flex-direction: column;
    padding: 2px 0;
    text-align: center;
}
.scrollbar button {
    height: 19px;
    background: #fff;
    border: 1px solid #c6c6c6;
}
.scrollbar .track {
    flex: 1;
    background: #dadada;
}
.scrollbar .handle {
    display: block;
    height: 20px;
    margin-top: 172px;
    background: #fff;
    border: 1px solid #ababab;
}
.scrollbar .handle.tall {
    height: 159px;
    margin-top: 117px;
}
.scrollbar .page {
    flex-direction: column;
    background: none;
    border: 0;
}
.editor {
    flex: 1;
    min-width: 0;
    display: flex;
    flex-direction: column;
}
.stage {
    flex: 1;
    min-height: 0;
    display: flex;
    border-bottom: 1px solid #bdbdbd;
}
.stage > .scrollbar {
    padding-bottom: 24px;
}
.stage .page {
    margin-top: 3px;
}
.canvas {
    flex: 1;
    display: grid;
    grid-template-columns: 17px 1fr;
    grid-template-rows: 17px auto;
    column-gap: 177px;
    row-gap: 21px;
    align-content: start;
    padding: 5px 169px 0 7px;
}
.ruler {
    display: flex;
    background: #fff;
    color: #444;
    font-size: 15px;
    line-height: 17px;
}
.ruler span {
    flex: 1;
    text-align: center;
}
.ruler.h {
    grid-column: 2;
    margin: 0 1px 0 2px;
    padding: 0 15px 0 14px;
    line-height: 15px;
}
.ruler.h span {
    background:
        linear-gradient(#444, #444) 0 50% / 1px 7px no-repeat,
        linear-gradient(#999, #999) 20% 50% / 1px 1px no-repeat,
        linear-gradient(#999, #999) 80% 50% / 1px 1px no-repeat;
}
.ruler.h span:last-child {
    border-right: 1px solid #444;
    border-image: linear-gradient(transparent 30%, #444 30% 70%, transparent 70%) 1;
}
.ruler.v {
    margin: 2px 0;
    writing-mode: vertical-rl;
    transform: rotate(180deg);
}
.ruler.v span {
    background:
        linear-gradient(#444, #444) 50% 0 / 6px 1px no-repeat,
        linear-gradient(#999, #999) 50% 22% / 1px 1px no-repeat,
        linear-gradient(#999, #999) 50% 78% / 1px 1px no-repeat;
}
.slide-wrap {
    position: relative;
}
.slide {
    width: 100%;
    outline: 1px solid #c3c3c3;
    outline-offset: -1px;
    background: repeating-linear-gradient(135deg, #e6e6e4 0 2px, #f3f3f1 2px 4px);
}
.guide {
    position: absolute;
}
.guide.vert {
    left: 50%;
    top: -13px;
    bottom: -21px;
    border-left: 1px dashed #a6a6a6;
}
.guide.horz {
    top: 50%;
    left: -168px;
    right: -165px;
    border-top: 1px dashed #a6a6a6;
}
.notes {
    flex: none;
    height: 46px;
    padding: 9px 13px;
    font-size: 18px;
    color: #555;
}

/* slide artwork */
.t-title text, .t-box text, .t-core, .nav-text text, .show-text text {
    text-anchor: middle;
    font-weight: bold;
}
.t-title {
    font-size: 26px;
    fill: #fff;
}
.t-h1 {
    font-size: 24px;
    font-weight: bold;
}
.t-def {
    font-size: 21px;
    font-weight: bold;
}
.t-box {
    font-size: 21px;
    fill: #414456;
}
.t-box.small {
    font-size: 18px;
}
.t-core {
    font-size: 24px;
    fill: #fff;
}
.t-body {
    font-size: 21px;
}
.t-title, .t-h1, .t-def, .t-body {
    white-space: pre;
}
.t-h1, .t-def, .t-body {
    fill: #000;
}
.em {
    fill: #c00000;
    font-weight: bold;
}
.box rect {
    fill: none;
    stroke: #414456;
    stroke-width: 3px;
}
.box.fat rect {
    stroke-width: 7px;
}
.line {
    fill: none;
    stroke: #414456;
    stroke-width: 2px;
}
.line.fat {
    stroke-width: 6px;
}
.bracket {
    fill: none;
    stroke: #414456;
    stroke-width: 3px;
}
.nav-text {
    font-size: 21px;
    fill: #f2f2f0;
    text-shadow: 1px 2px 2px rgba(0, 0, 0, 0.4);
}
.nav-sep {
    fill: none;
    stroke: #b5b6ba;
    stroke-width: 2px;
}
.nav-sep.thick {
    stroke: #b4b4b4;
    stroke-width: 5px;
}
.selection path {
    fill: none;
    stroke: #969696;
}
.selection circle {
    fill: #fff;
    stroke: #969696;
    stroke-width: 2px;
}
.selection .rot-out {
    stroke-width: 7px;
}
.selection .rot-in {
    stroke: #fff;
    stroke-width: 3px;
}
.selection .rot-head {
    fill: #fff;
    stroke-width: 2px;
}
.dash rect {
    fill: none;
    stroke: #414456;
    stroke-width: 6px;
    stroke-dasharray: 28 16;
}
.panel rect {
    fill: #e8e8e6;
    stroke: #fff;
    stroke-width: 8px;
}
.mini {
    font-size: 22px;
    text-anchor: middle;
    fill: #222;
}
.mini.start {
    text-anchor: start;
}
.mini-title {
    font-size: 26px;
    font-weight: bold;
    text-anchor: middle;
    fill: #fff;
}
.mini.strong, .mini .strong {
    font-weight: bold;
}
.mini.red {
    fill: #c00000;
}
.mini.white {
    fill: #fff;
    font-weight: bold;
}

/* status bar */
.status {
    flex: none;
    height: 28px;
    display: flex;
    align-items: center;
    padding: 0 6px 0 8px;
    background: #f3f3f3;
    border-top: 1px solid #c6c6c6;
}
.spell {
    margin: 0 auto 0 21px;
}
.note-btn {
    gap: 6px;
}
.comment-btn {
    gap: 2px;
    margin: 0 20px;
}
.views {
    display: flex;
    align-self: stretch;
}
.views button {
    width: 42px;
}
.views path {
    fill: none;
    stroke: #666;
}
.views .on {
    background: #c6c6c6;
}
.zoom-btn {
    margin: 0 5px;
}
input[type="range"] {
    appearance: none;
    width: 119px;
    height: 14px;
    margin: 0 2px;
    background: linear-gradient(#ababab, #ababab) 50% 50% / 100% 1px no-repeat, linear-gradient(#ababab, #ababab) 50% 50% / 1px 7px no-repeat;
}
input[type="range"]::-webkit-slider-thumb {
    appearance: none;
    width: 6px;
    height: 14px;
    background: #666;
}
.percent {
    margin: 0 16px 0 7px;
}
.backdrop {
    flex: none;
    height: 38px;
    overflow: hidden;
    background: repeating-linear-gradient(135deg, #e6e6e4 0 2px, #f6f6f4 2px 4px);
}
.backdrop svg {
    width: 100%;
    height: 38px;
}
.show-text {
    font-size: 32px;
    fill: #f2f2f0;
    text-shadow: 2px 3px 2px rgba(0, 0, 0, 0.4);
}
```
